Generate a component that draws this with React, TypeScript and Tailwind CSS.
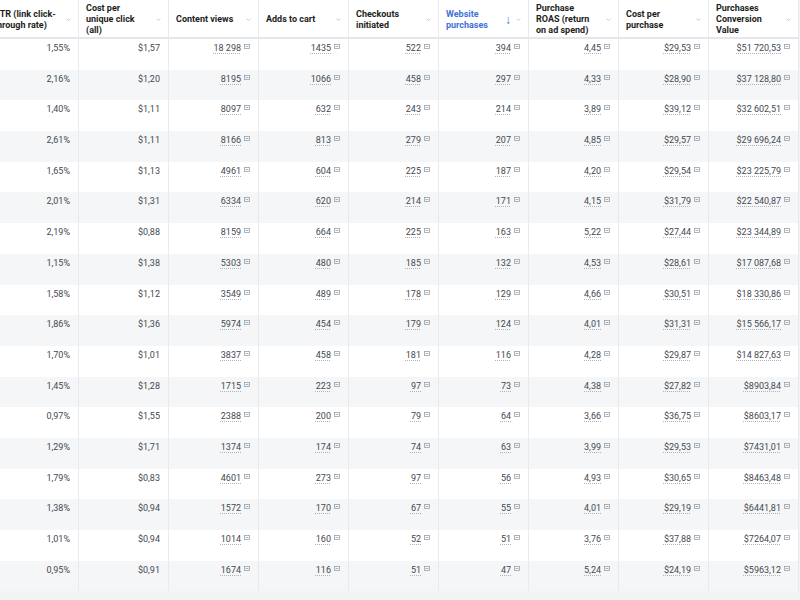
import React from "react"

const columns = [
    "CTR (link click-through rate)",
    "Cost per unique click (all)",
    "Content views",
    "Adds to cart",
    "Checkouts initiated",
    "Website purchases",
    "Purchase ROAS (return on ad spend)",
    "Cost per purchase",
    "Purchases Conversion Value",
]

const headerLines: string[][] = [
    ["CTR (link click-", "through rate)"],
    ["Cost per", "unique click", "(all)"],
    ["Content views"],
    ["Adds to cart"],
    ["Checkouts", "initiated"],
    ["Website", "purchases"],
    ["Purchase", "ROAS (return", "on ad spend)"],
    ["Cost per", "purchase"],
    ["Purchases", "Conversion", "Value"],
]

const rows: string[][] = [
    ["1,55%", "$1,57", "18 298", "1435", "522", "394", "4,45", "$29,53", "$51 720,53"],
    ["2,16%", "$1,20", "8195", "1066", "458", "297", "4,33", "$28,90", "$37 128,80"],
    ["1,40%", "$1,11", "8097", "632", "243", "214", "3,89", "$39,12", "$32 602,51"],
    ["2,61%", "$1,11", "8166", "813", "279", "207", "4,85", "$29,57", "$29 696,24"],
    ["1,65%", "$1,13", "4961", "604", "225", "187", "4,20", "$29,54", "$23 225,79"],
    ["2,01%", "$1,31", "6334", "620", "214", "171", "4,15", "$31,79", "$22 540,87"],
    ["2,19%", "$0,88", "8159", "664", "225", "163", "5,22", "$27,44", "$23 344,89"],
    ["1,15%", "$1,38", "5303", "480", "185", "132", "4,53", "$28,61", "$17 087,68"],
    ["1,58%", "$1,12", "3549", "489", "178", "129", "4,66", "$30,51", "$18 330,86"],
    ["1,86%", "$1,36", "5974", "454", "179", "124", "4,01", "$31,31", "$15 566,17"],
    ["1,70%", "$1,01", "3837", "458", "181", "116", "4,28", "$29,87", "$14 827,63"],
    ["1,45%", "$1,28", "1715", "223", "97", "73", "4,38", "$27,82", "$8903,84"],
    ["0,97%", "$1,55", "2388", "200", "79", "64", "3,66", "$36,75", "$8603,17"],
    ["1,29%", "$1,71", "1374", "174", "74", "63", "3,99", "$29,53", "$7431,01"],
    ["1,79%", "$0,83", "4601", "273", "97", "56", "4,93", "$30,65", "$8463,48"],
    ["1,38%", "$0,94", "1572", "170", "67", "55", "4,01", "$29,19", "$6441,81"],
    ["1,01%", "$0,94", "1014", "160", "52", "51", "3,76", "$37,88", "$7264,07"],
    ["0,95%", "$0,91", "1674", "116", "51", "47", "5,24", "$24,19", "$5963,12"],
]

// little "breakdown" box shown after linked values
function DetailIcon() {
    return (
        <svg width="6" height="5" viewBox="0 0 6 5" className="ml-[3px] mt-[1px] shrink-0">
            <rect x="0.5" y="0.5" width="5" height="4" fill="none" stroke="#9ca0a6" strokeWidth="0.8" />
            <path d="M1.6 2.5h2.8" stroke="#9ca0a6" strokeWidth="0.8" />
        </svg>
    )
}

function SortCaret() {
    return (
        <svg width="5" height="3" viewBox="0 0 5 3" className="shrink-0">
            <path d="M0.5 0.8L2.5 2.4L4.5 0.8" fill="none" stroke="#c4c7cc" strokeWidth="0.9" />
        </svg>
    )
}

export default function App() {
    return (
        <div
            className="w-[800px] h-[600px] overflow-hidden bg-[#f2f3f5] text-[#1c1e21]"
            style={{ fontFamily: "Roboto, 'Liberation Sans', sans-serif" }}
        >
            <div className="ml-[-13px] w-[812px] bg-white">
                {/* header */}
                <div className="grid grid-cols-[92px_repeat(8,90px)] h-[39px] border-b-2 border-[#e4e6ea]">
                    {headerLines.map((lines, i) => {
                        const active = i === 5
                        return (
                            <div
                                key={columns[i]}
                                className="flex items-center justify-between pt-[2px] pl-[7px] pr-[7px] border-r border-[#e9eaed]"
                            >
                                <div
                                    className={
                                        "text-[9px] leading-[11px] font-bold " +
                                        (active ? "text-[#3f72d6]" : "text-[#1c1e21]")
                                    }
                                >
                                    {lines.map((l) => (
                                        <div key={l} className="whitespace-nowrap">{l}</div>
                                    ))}
                                </div>
                                <div className="flex items-center gap-[5px]">
                                    {active && (
                                        <span className="text-[12px] leading-none text-[#3f72d6]">↓</span>
                                    )}
                                    <SortCaret />
                                </div>
                            </div>
                        )
                    })}
                </div>

                {/* body */}
                {rows.map((row, r) => (
                    <div
                        key={r}
                        className={
                            "grid grid-cols-[92px_repeat(8,90px)] h-[30.7px] " +
                            (r % 2 === 1 ? "bg-[#f5f6f7]" : "bg-white")
                        }
                    >
                        {row.map((val, c) => (
                            <div
                                key={c}
                                className="flex items-start justify-end pt-[4px] pr-[8px] border-r border-[#e9eaed] text-[9px] leading-[11px] text-[#444950]"
                            >
                                {c < 2 ? (
                                    <span className="whitespace-nowrap">{val}</span>
                                ) : (
                                    <>
                                        <span className="whitespace-nowrap underline decoration-dotted decoration-[#b0b3b8] underline-offset-2">
                                            {val}
                                        </span>
                                        <DetailIcon />
                                    </>
                                )}
                            </div>
                        ))}
                    </div>
                ))}
            </div>
        </div>
    )
}
